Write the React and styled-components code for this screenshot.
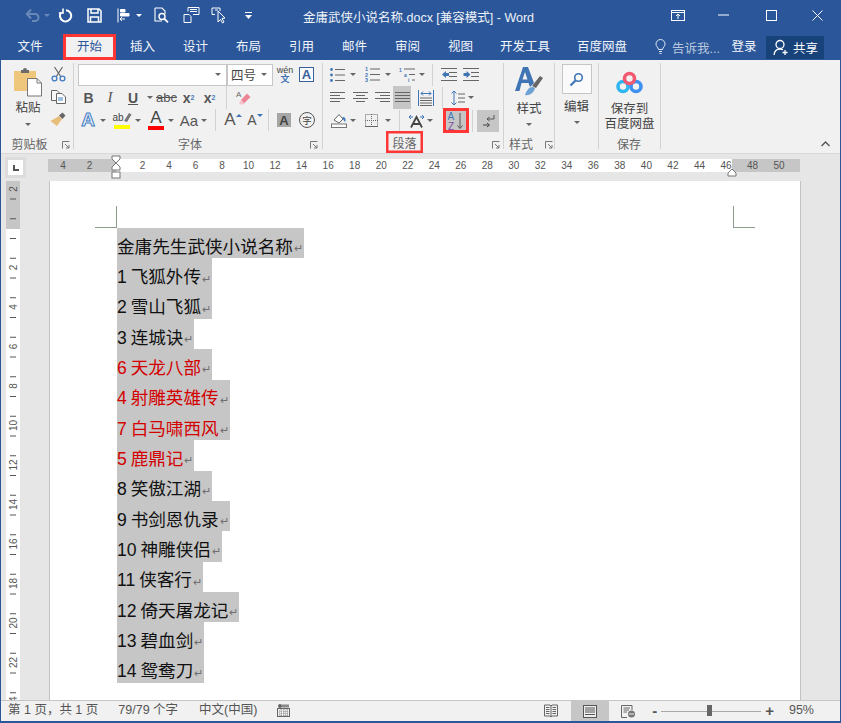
import React from "react";
import styled, { createGlobalStyle } from "styled-components";

const BLUE = "#2b579a";
const RED = "#ff3636";
const SEL = "#c6c6c6";

const Global = createGlobalStyle`
  html, body { margin: 0; padding: 0; background: #fff; }
  * { box-sizing: border-box; }
  #root { width: 841px; height: 723px; overflow: hidden; }
`;

const Window = styled.div`
  width: 841px; height: 723px; display: flex; flex-direction: column;
  border: solid ${BLUE}; border-width: 0 1px 2px 1px; background: #e6e6e6;
  font-family: "Liberation Sans", "Noto Sans CJK SC", sans-serif; font-size: 12.5px; color: #444;
  overflow: hidden;
`;
const TitleBar = styled.header`
  height: 30px; flex: none; background: ${BLUE}; display: flex; align-items: center; position: relative; color: #fff;
`;
const Qat = styled.div`display: flex; align-items: center; height: 30px;`;
const QatCell = styled.span`
  display: inline-flex; align-items: center; justify-content: center; height: 30px;
  width: ${p => p.$w}px; margin-left: ${p => p.$ml || 0}px;
`;
const TitleText = styled.div`
  position: absolute; left: 302px; top: 3px; height: 27px; line-height: 31px; font-size: 12.5px; color: #eef2f8; white-space: nowrap;
`;
const WinControls = styled.div`margin-left: auto; display: flex; align-items: center;`;
const WinBtn = styled.span`
  display: inline-flex; align-items: center; justify-content: center; height: 30px; width: ${p => p.$w}px; margin-left: ${p => p.$ml || 0}px;
`;

const TabBar = styled.nav`
  height: 30px; flex: none; background: ${BLUE}; display: flex; align-items: flex-end; color: #fff;
`;
const Tab = styled.div`
  width: ${p => p.$w}px; height: 26px; line-height: 27px; text-align: center; font-size: 12.5px; flex: none;
  color: ${p => (p.$active ? BLUE : "#f2f5fa")};
  background: ${p => (p.$active ? "#f1f1f1" : "transparent")};
  box-shadow: ${p => (p.$active ? `inset 0 0 0 3px ${RED}` : "none")};
`;
const TellMe = styled.div`
  width: 70px; height: 30px; margin-left: 14px; display: flex; align-items: center; gap: 6px; color: #b9c8de; font-size: 12.5px; white-space: nowrap; padding-top: 4px;
`;
const Login = styled.div`width: 38px; height: 26px; line-height: 27px; text-align: center; color: #f2f5fa;`;
const Share = styled.div`
  width: 58px; height: 23px; margin-bottom: 1px; margin-left: 3px; background: #17427a; display: flex; align-items: center; padding-left: 7px; gap: 3px; color: #fff;
`;

const Ribbon = styled.section`
  height: 93px; flex: none; background: #f1f1f1; display: flex; padding: 3px 0 4px; position: relative;
`;
const Group = styled.div`
  width: ${p => p.$w}px; flex: none; display: flex; flex-direction: column; border-right: 1px solid #d2d2d2;
`;
const GroupBody = styled.div`
  height: 68px; flex: none; display: flex; padding-left: ${p => p.$pl || 0}px;
`;
const GroupFoot = styled.div`
  height: 20px; display: flex; align-items: center; font-size: 12px; color: #666; padding-left: ${p => p.$pl || 0}px; padding-top: 5px;
`;
const FootLabel = styled.span`
  display: inline-flex; align-items: center; justify-content: center; width: ${p => p.$w}px; height: 18px; flex: none; white-space: nowrap;
  ${p => p.$mark ? `height: 22px; margin-top: -3px; box-shadow: inset 0 0 0 2.5px ${RED};` : ""}
`;
const Launcher = styled.svg`margin-left: ${p => p.$ml}px; flex: none; margin-top: 3px;`;
const BigBtn = styled.div`
  width: ${p => p.$w}px; display: flex; flex-direction: column; align-items: center; font-size: 12.5px; color: #444; line-height: 15px;
`;
const BigIcon = styled.div`
  height: ${p => p.$h}px; display: flex; align-items: center; justify-content: center; flex: none;
`;
const BigLabel = styled.span`margin-top: ${p => p.$mt || 0}px; white-space: nowrap;`;
const FramedIcon = styled.div`
  width: 30px; height: 30px; margin-top: 1px; border: 1px solid #c6c6c6; background: #fafafa; display: flex; align-items: center; justify-content: center;
`;
const SmallCol = styled.div`
  width: ${p => p.$w}px; display: flex; flex-direction: column; align-items: center;
`;
const SmallCell = styled.div`height: 23px; display: flex; align-items: center; justify-content: center;`;
const Rows = styled.div`display: flex; flex-direction: column; width: ${p => p.$w}px;`;
const Row = styled.div`height: ${p => p.$h || 23}px; display: flex; align-items: center; flex: none;`;
const Cell = styled.span`
  display: inline-flex; align-items: center; justify-content: center; flex: none; position: relative;
  width: ${p => p.$w}px; height: ${p => p.$h || 23}px; margin-left: ${p => p.$ml || 0}px;
  color: #555; font-weight: ${p => p.$b ? 700 : 400}; font-style: ${p => p.$i ? "italic" : "normal"};
  font-family: ${p => p.$serif ? '"Liberation Serif", serif' : "inherit"};
  font-size: ${p => p.$fs || 12.5}px; text-decoration: ${p => p.$td || "none"};
  background: ${p => p.$on ? SEL : "transparent"};
  ${p => p.$mark ? `box-shadow: inset 0 0 0 3px ${RED};` : ""}
`;
const Caret = styled.i`
  display: inline-block; flex: none; width: 0; height: 0;
  border-left: 3px solid transparent; border-right: 3px solid transparent; border-top: 3px solid ${p => p.$c || "#666"};
`;
const SizeCaret = styled(Caret)`
  margin-top: -10px;
  transform: ${p => p.$up ? "rotate(180deg)" : "none"};
`;
const CaretCell = styled.span`
  display: inline-flex; align-items: center; justify-content: center; flex: none; width: ${p => p.$w || 10}px; height: ${p => p.$h || 23}px; margin-left: ${p => p.$ml || 0}px;
`;
const VSep = styled.span`
  width: 1px; height: ${p => p.$h || 22}px; background: #d2d2d2; flex: none; margin-left: ${p => p.$ml || 0}px;
`;
const Combo = styled.div`
  width: ${p => p.$w}px; height: 22px; background: #fff; border: 1px solid #c6c6c6; flex: none; display: flex; align-items: center; justify-content: flex-end; padding-right: 5px;
`;
const ComboText = styled.span`margin-right: auto; padding-left: 3px; font-size: 12.5px; color: #444;`;
const GlyphBox = styled.span`
  display: inline-flex; align-items: center; justify-content: center; width: 15px; height: 15px; border: 1px solid #39629c; color: #39629c; font-size: 13px; font-weight: 700; background: #fbfbfb;
`;
const ShadeA = styled.span`
  display: inline-flex; align-items: center; justify-content: center; width: 14px; height: 14px; background: #a6a6a6; color: #444; font-size: 13px; font-weight: 700;
`;
const CircleZi = styled.span`
  display: inline-flex; align-items: center; justify-content: center; width: 16px; height: 16px; border: 1px solid #555; border-radius: 50%; font-size: 9.5px; color: #444;
`;
const Wen = styled.span`
  display: inline-flex; flex-direction: column; align-items: center; line-height: 9px; font-size: 9px; color: #444;
`;
const WenHan = styled.span`color: #3f74b5; font-size: 9px; font-weight: 700;`;
const SuperSub = styled.sub`font-size: 7px; color: #4a7eb8; line-height: 0;`;
const SuperSup = styled.sup`font-size: 7px; color: #4a7eb8; line-height: 0;`;
const ColourA = styled.span`
  display: inline-flex; flex-direction: column; align-items: center; width: 16px; font-size: ${p => p.$fs || 13}px; line-height: ${p => p.$lh || 12}px; color: #444;
`;
const MarkerRow = styled.span`display: flex; align-items: center;`;
const ColourBar = styled.i`display: block; width: 16px; height: 4px; margin-top: 1px; background: ${p => p.$c};`;
const OutlineA = styled.span`
  font-size: 19px; font-weight: 700; color: #e8f1fb; -webkit-text-stroke: 1px #3f7cc2;
`;
const Collapse = styled.svg`position: absolute; right: 10px; bottom: 6px;`;

const RulerBar = styled.div`
  height: 27px; flex: none; background: #e6e6e6; border-top: 1px solid #d8d8d8; display: flex; padding-left: 4px;
`;
const Corner = styled.div`
  width: 21px; height: 21px; margin-top: 3px; background: #dcdcdc; padding: 3px; flex: none;
`;
const CornerInner = styled.div`
  width: 15px; height: 15px; background: #fff; display: flex; align-items: center; justify-content: center;
`;
const RulerSlot = styled.div`margin-left: 22px; width: 752px; height: 26px;`;

const Main = styled.main`flex: 1; min-height: 0; display: flex; background: #e6e6e6;`;
const SideRuler = styled.div`width: 48px; padding: 1px 0 0 5px; flex: none; overflow: hidden;`;
const Page = styled.div`
  width: 752px; margin-top: 1px; background: #fff; border: solid #c2c2c2; border-width: 0 1px; flex: none; overflow: hidden;
`;
const Marks = styled.div`
  display: flex; justify-content: space-between; padding: 25px 45px 0 45px;
`;
const CropMark = styled.div`
  width: 22px; height: 22px; border-bottom: 1px solid #8b9b8b;
  ${p => p.$right ? "border-left: 1px solid #8b9b8b;" : "border-right: 1px solid #8b9b8b;"}
`;
const Doc = styled.div`padding-left: 67px; font-size: 17.6px; color: #111;`;
const Line = styled.div`height: 30.33px; display: flex;`;
const Sel = styled.span`
  display: inline-flex; align-items: center; height: 100%; background: ${SEL}; padding-top: 7px; white-space: pre; line-height: 22px; word-spacing: -1px;
  color: ${p => p.$red ? "#d40000" : "#111"};
`;
const Pilcrow = styled.span`
  display: inline-block; width: 11px; font-size: 11px; color: #6f6f6f; text-align: center; padding-top: 3px;
`;

const StatusBar = styled.footer`
  height: 21px; flex: none; background: #f1f1f1; border-top: 1px solid #c6c6c6; display: flex; align-items: stretch; color: #555; font-size: 12.5px; padding-right: 26px; line-height: 17px;
`;
const StatusItem = styled.span`
  display: inline-flex; align-items: center; margin-left: ${p => p.$ml}px; white-space: nowrap; flex: none; padding-bottom: 2px;
  font-size: ${p => p.$fs || 12.5}px; font-weight: ${p => p.$b ? 700 : 400};
`;
const ViewGroup = styled.div`margin-left: auto; display: flex; align-items: stretch;`;
const ViewBtn = styled.span`
  display: inline-flex; align-items: center; justify-content: center; flex: none; width: ${p => p.$w}px; margin-left: ${p => p.$ml || 0}px;
  background: ${p => p.$on ? "#c6c6c6" : "transparent"};
`;
const Slider = styled.div`
  width: 100px; margin-left: 4px; display: flex; align-items: center; position: relative; flex: none;
  &::before { content: ""; width: 100%; height: 1px; background: #a8a8a8; }
`;
const Thumb = styled.i`
  position: absolute; left: 46px; top: 4px; width: 5px; height: 11px; background: #666;
`;

/* ---------- icons ---------- */
const Undo = () => (
  <svg width="16" height="14" viewBox="0 0 16 14" fill="none" stroke="#6a88b8" strokeWidth="2">
    <path d="M2 6 H10 A3.5 3.5 0 0 1 10 13 H7" /><path d="M6 1.5 L1.8 6 L6 10.5" />
  </svg>
);
const Repeat = () => (
  <svg width="15" height="15" viewBox="0 0 15 15" fill="none" stroke="#fff" strokeWidth="2">
    <path d="M8 2.2 A5.6 5.6 0 1 1 3.2 4.3" /><path d="M5 0.5 V5 H0.8" strokeWidth="1.6" />
  </svg>
);
const SaveIc = () => (
  <svg width="15" height="15" viewBox="0 0 15 15" fill="none" stroke="#fff" strokeWidth="1.5">
    <path d="M1 1 H12 L14 3 V14 H1 Z" /><path d="M4 1 V5 H11 V1" /><path d="M3.5 14 V9 H11.5 V14" />
  </svg>
);
const Touch = () => (
  <svg width="14" height="15" viewBox="0 0 14 15" fill="none" stroke="#fff" strokeWidth="1">
    <path d="M1 0.5 V14.5" /><path d="M3.5 1.5 H8 V4 H3.5 Z" fill="#fff" /><path d="M3.5 5.5 H12 V8 H3.5 Z" fill="#fff" /><path d="M8 11 H3 M5 9 L3 11 L5 13" />
  </svg>
);
const Preview = () => (
  <svg width="15" height="16" viewBox="0 0 15 16" fill="none" stroke="#fff" strokeWidth="1.1">
    <path d="M1 1 H8 L11 4 V7 M1 1 V14 H8" /><circle cx="8" cy="9.5" r="3" strokeWidth="1.4" /><path d="M10.5 12 L14 15.3" strokeWidth="1.8" />
  </svg>
);
const NewDoc = () => (
  <svg width="17" height="16" viewBox="0 0 17 16" fill="none" stroke="#fff" strokeWidth="1">
    <path d="M1 7.5 H6 L8 9.5 V15.5 H1 Z" /><path d="M5 4.5 V0.5 H16 V7.5 H10" /><path d="M7 2.5 H14 M7 4.5 H14" />
  </svg>
);
const TouchSel = () => (
  <svg width="17" height="17" viewBox="0 0 17 17" fill="none" stroke="#fff" strokeWidth="1">
    <path d="M4 7.5 H1 V1 H9 V4" /><path d="M4 3 H7" /><path d="M7 4 L7 15 L9.5 12.5 L11.5 16 L13 15 L11 11.5 L14 11 Z" />
  </svg>
);
const Customize = () => (
  <svg width="7" height="7" viewBox="0 0 7 7" fill="#fff"><path d="M0 0 H7 V1 H0 Z M0 3 H7 L3.5 7 Z" /></svg>
);
const RibbonOpt = () => (
  <svg width="14" height="11" viewBox="0 0 14 11" fill="none" stroke="#fff"><rect x="0.5" y="0.5" width="13" height="10" /><path d="M0.5 2.5 H13.5" /><path d="M7 9 V4.5 M5 6 L7 4 L9 6" /></svg>
);
const Bulb = () => (
  <svg width="11" height="16" viewBox="0 0 11 16" fill="none" stroke="#dfe7f2"><path d="M3.5 10.5 C3 8 1 7.5 1 5 A4.5 4.5 0 0 1 10 5 C10 7.5 8 8 7.5 10.5 Z" /><path d="M4 12.5 H7 M4.5 14.5 H6.5" /></svg>
);
const UserPlus = () => (
  <svg width="17" height="17" viewBox="0 0 17 17" fill="none" stroke="#fff" strokeWidth="1.3"><circle cx="7" cy="5.5" r="4" /><path d="M1 16 C1.5 12 4 10 7 10 C8 10 9 10.2 10 10.8" /><path d="M12 11 V16 M9.5 13.5 H14.5" /></svg>
);
const Clipboard = () => (
  <svg width="30" height="30" viewBox="0 0 30 30">
    <path d="M1 4 H23 V24 H1 Z" fill="#efc77c" />
    <path d="M8 3 H10 A2 2 0 0 1 14 3 H16 V6 H8 Z" fill="#6b6b6b" />
    <path d="M14.5 11.5 H24 L28.5 16 V29 H14.5 Z" fill="#fff" stroke="#777" />
    <path d="M24 11.5 V16 H28.5" fill="none" stroke="#777" />
  </svg>
);
const ScissorsIc = () => (
  <svg width="15" height="16" viewBox="0 0 15 16" fill="none">
    <path d="M3.5 1 L10 11 M11.5 1 L5 11" stroke="#666" strokeWidth="1.2" />
    <circle cx="3.5" cy="12.5" r="2.4" stroke="#3f7cc2" strokeWidth="1.3" /><circle cx="11.5" cy="12.5" r="2.4" stroke="#3f7cc2" strokeWidth="1.3" />
  </svg>
);
const CopyIc = () => (
  <svg width="15" height="14" viewBox="0 0 15 14" fill="none" stroke="#666">
    <path d="M0.5 0.5 H6 L8 2.5 V10.5 H0.5 Z" fill="#f8f8f8" /><path d="M5.5 3.5 H11 L14.5 7 V13.5 H5.5 Z" fill="#fff" /><path d="M7 8 H12 M7 10 H12" stroke="#3f7cc2" />
  </svg>
);
const Brush = () => (
  <svg width="16" height="15" viewBox="0 0 16 15">
    <path d="M9 4 L12 7 L7 14 L0.5 9 Z" fill="#e6bd7a" /><path d="M9 3.5 L12.5 0.5 L15.5 3.5 L12.5 7 Z" fill="#666" />
  </svg>
);
const Eraser = () => (
  <svg width="15" height="16" viewBox="0 0 15 16">
    <path d="M5 10 L11 3.5 L14.5 7 L8 13.5 Z" fill="#ee8596" /><path d="M3 13.5 L5 10 L8 13.5 L6 15 Z" fill="#f5c3cb" />
    <text x="0" y="7" fontSize="8" fill="#666" fontFamily="Liberation Sans">A</text>
  </svg>
);
const Marker = () => (
  <svg width="8" height="11" viewBox="0 0 8 11"><path d="M0 9 L5 1 L7.5 2.5 L3 10 Z" fill="#777" /></svg>
);
const listLines = (ys, x1 = 0, x2 = 15) => ys.map(y => <path key={y} d={`M${x1} ${y} H${x2}`} stroke="#666" />);
const Bullets = () => (
  <svg width="15" height="14" viewBox="0 0 15 14">
    {[1.5, 7, 12.5].map(y => <circle key={y} cx="1.5" cy={y} r="1.4" fill="#3f74b5" />)}
    {[[5, 1.5], [5, 7], [5, 12.5]].map(([x, y]) => <path key={y} d={`M${x} ${y} H15`} stroke="#666" />)}
  </svg>
);
const Numbered = () => (
  <svg width="15" height="15" viewBox="0 0 15 15">
    {[[4, "1"], [9.5, "2"], [15, "3"]].map(([y, t]) => <text key={t} x="0" y={y} fontSize="5.5" fontWeight="700" fill="#3f74b5" fontFamily="Liberation Sans">{t}</text>)}
    {[2, 7.5, 13].map(y => <path key={y} d={`M5 ${y} H15`} stroke="#666" />)}
  </svg>
);
const Multi = () => (
  <svg width="17" height="15" viewBox="0 0 17 15">
    <text x="0" y="4.5" fontSize="5" fontWeight="700" fill="#3f74b5" fontFamily="Liberation Sans">1</text>
    <text x="5" y="9.5" fontSize="5" fontWeight="700" fill="#3f74b5" fontFamily="Liberation Sans">a</text>
    <text x="9" y="15" fontSize="5" fontWeight="700" fill="#3f74b5" fontFamily="Liberation Sans">i</text>
    <path d="M5 2 H16 M10 7.5 H16 M13 13 H16" stroke="#666" />
  </svg>
);
const Indent = ({ out }) => (
  <svg width="16" height="13" viewBox="0 0 16 13">
    {[0.5, 4.5, 8.5, 12.5].map(y => <path key={y} d={`M${y === 0.5 || y === 12.5 ? 0 : 8} ${y} H16`} stroke="#666" />)}
    <path d={out ? "M1 6.5 L5 3 V5 H8 V8 H5 V10 Z" : "M7.5 6.5 L3.5 3 V5 H0.5 V8 H3.5 V10 Z"} fill="#3f74b5" />
  </svg>
);
const Align = ({ kind }) => {
  const short = { left: [0, 10], center: [3, 12], right: [5, 15] }[kind];
  return (
    <svg width="15" height="11" viewBox="0 0 15 11">
      {[0.5, 3.5, 6.5, 9.5].map((y, i) => <path key={y} d={i % 2 && kind ? `M${short[0]} ${y} H${short[1]}` : `M0 ${y} H15`} stroke="#666" />)}
    </svg>
  );
};
const Distribute = () => (
  <svg width="16" height="16" viewBox="0 0 16 16">
    <path d="M0.5 0 V16 M15.5 0 V16" stroke="#3f74b5" /><path d="M3 3.5 H13 M3 3.5 L5 1.5 M3 3.5 L5 5.5 M13 3.5 L11 1.5 M13 3.5 L11 5.5" stroke="#3f74b5" fill="none" />
    {listLines([8, 10.5, 13, 15.5], 2, 14)}
  </svg>
);
const LineSpacing = () => (
  <svg width="14" height="16" viewBox="0 0 14 16" fill="none">
    <path d="M3 1 V15 M0.5 3.5 L3 1 L5.5 3.5 M0.5 12.5 L3 15 L5.5 12.5" stroke="#3f74b5" /><path d="M7 4 H14 M7 8 H14 M7 12 H14" stroke="#666" />
  </svg>
);
const Shading = () => (
  <svg width="16" height="15" viewBox="0 0 16 15">
    <path d="M3 7 L8 1.5 L12 6 L8 10 Z" fill="#fff" stroke="#666" /><path d="M11.5 4 C14 4 15.5 6 14 9 C12.5 7.5 12 6 11.5 4Z" fill="#3f7cc2" />
    <rect x="0.5" y="11" width="15" height="3.5" fill="#fff" stroke="#777" />
  </svg>
);
const Borders = () => (
  <svg width="13" height="13" viewBox="0 0 13 13" fill="none" stroke="#666" strokeDasharray="1 1">
    <rect x="0.5" y="0.5" width="12" height="12" /><path d="M6.5 0 V13 M0 6.5 H13" /><path d="M0 12.5 H13" strokeDasharray="none" />
  </svg>
);
const CnLayout = () => (
  <svg width="17" height="14" viewBox="0 0 17 14">
    <path d="M3 13.5 L8.5 3 L14 13.5 M5 10 H12" fill="none" stroke="#444" strokeWidth="1.8" />
    <path d="M1 3 H5 M1 3 L3 1 M1 3 L3 5 M12 3 H16 M16 3 L14 1 M16 3 L14 5" stroke="#3f74b5" fill="none" />
  </svg>
);
const Sort = () => (
  <svg width="16" height="18" viewBox="0 0 16 18">
    <text x="-0.5" y="8" fontSize="10" fill="#3f74b5" fontFamily="Liberation Sans">A</text>
    <text x="0" y="17.5" fontSize="10" fill="#7b4fa3" fontFamily="Liberation Sans">Z</text>
    <path d="M12 1 V16 M9.5 13.5 L12 16.5 L14.5 13.5" fill="none" stroke="#555" />
  </svg>
);
const Para = () => (
  <svg width="13" height="14" viewBox="0 0 13 14" fill="none" stroke="#555">
    <path d="M12 1 V5 H5 M7.5 3 L5 5 L7.5 7" /><path d="M1 11 H7 M5 9 L7.5 11 L5 13" stroke="#444" />
  </svg>
);
const StyleA = () => (
  <svg width="28" height="30" viewBox="0 0 28 30">
    <path d="M0 24 L8 0 H13 L19 16 L15 20 L13.5 16 H6.5 L4.5 24 Z M7.5 12.5 H12.5 L10 5 Z" fill="#3f74b5" fillRule="evenodd" />
    <path d="M17 19 L25 9 L28 11 L21 21 Z" fill="#666" /><path d="M10 28 C12 22 16 18 20 21 C19 26 14 29 10 28 Z" fill="#6ea1d6" />
  </svg>
);
const Search = () => (
  <svg width="15" height="15" viewBox="0 0 15 15" fill="none" stroke="#3f74b5"><circle cx="9.5" cy="5.5" r="3.8" strokeWidth="1.6" /><path d="M6.5 8.5 L1.5 13.5" strokeWidth="2.2" /></svg>
);
const BaiduLogo = () => (
  <svg width="27" height="24" viewBox="0 0 27 24" fill="none">
    <circle cx="7" cy="15.5" r="5" stroke="#2fb5ef" strokeWidth="3.6" />
    <circle cx="20" cy="15.5" r="5" stroke="#3d8ff0" strokeWidth="3.6" />
    <circle cx="13.5" cy="7.5" r="5" stroke="#f2586f" strokeWidth="3.6" />
  </svg>
);
const LauncherIc = ({ ml }) => (
  <Launcher $ml={ml} width="8" height="8" viewBox="0 0 8 8" fill="none" stroke="#777">
    <path d="M0.5 7.5 V0.5 H7.5" /><path d="M3 3 L7 7 M7 4 V7 H4" />
  </Launcher>
);
const BookView = () => (
  <svg width="14" height="14" viewBox="0 0 14 14" fill="none" stroke="#666"><path d="M0.5 1 H6 L7 2 L8 1 H13.5 V12 H8 L7 13 L6 12 H0.5 Z M7 2 V13" /><path d="M2 3.5 H5.5 M2 5.5 H5.5 M2 7.5 H5.5 M2 9.5 H5.5 M8.5 3.5 H12 M8.5 5.5 H12 M8.5 7.5 H12 M8.5 9.5 H12" /></svg>
);
const PrintView = () => (
  <svg width="14" height="13" viewBox="0 0 14 13" fill="none" stroke="#555"><rect x="0.5" y="0.5" width="13" height="12" fill="#eee" /><path d="M2 3 H12 M2 5 H12 M2 7 H12 M2 9.5 H12" /></svg>
);
const WebView = () => (
  <svg width="15" height="13" viewBox="0 0 15 13" fill="none" stroke="#666"><path d="M6 12.5 H0.5 V0.5 H11 V5" /><path d="M2.5 3 H9 M2.5 5 H8 M2.5 7 H6" /><circle cx="10.5" cy="9" r="3.5" fill="#777" stroke="none" /><path d="M8 9 H13" stroke="#eee" /></svg>
);
const MacroIc = () => (
  <svg width="13" height="13" viewBox="0 0 13 13"><circle cx="3" cy="2" r="2" fill="#666" /><rect x="5" y="0.5" width="7" height="3" fill="#888" /><rect x="0.5" y="4.5" width="12" height="8" fill="none" stroke="#666" /><path d="M2 7 H11 M2 9 H11 M2 11 H11 M4 5 V12 M7 5 V12 M10 5 V12" stroke="#888" strokeDasharray="1 1" /></svg>
);

/* ---------- rulers ---------- */
const UNIT = 13.26;
const HRuler = () => {
  const labels = [];
  for (let n = 2; n <= 50; n += 2) labels.push([n, 68 + n * UNIT]);
  labels.unshift([4, 68 - 4 * UNIT], [2, 68 - 2 * UNIT]);
  return (
    <svg width="752" height="26" viewBox="0 0 752 26">
      <rect x="0" y="5" width="752" height="13" fill="#fff" />
      <rect x="0" y="5" width="68" height="13" fill="#c6c6c6" />
      <rect x="684" y="5" width="68" height="13" fill="#c6c6c6" />
      {labels.map(([n, x]) => (
        <text key={x} x={x} y="15" fontSize="10" textAnchor="middle" fill="#555" fontFamily="Liberation Sans">{n}</text>
      ))}
      <path d="M64 2 H72 V5 L68 9 L72 13 V16 H64 V13 L68 9 L64 5 Z" fill="#fff" stroke="#777" />
      <rect x="64" y="18" width="8" height="6" fill="#fff" stroke="#777" />
      <path d="M680 22 V19 L684 15 L688 19 V22 Z" fill="#fff" stroke="#777" />
    </svg>
  );
};
const VRuler = () => {
  const ticks = [];
  for (let i = -2; i < 25; i++) ticks.push(48 + 9.5 + i * 19.75);
  const nums = [[-1, "2"]];
  for (let n = 2; n <= 24; n += 2) nums.push([n, String(n)]);
  return (
    <svg width="14" height="519" viewBox="0 0 14 519">
      <rect width="14" height="519" fill="#fff" />
      <rect width="14" height="48" fill="#c6c6c6" />
      {ticks.map(y => <path key={y} d={`M4 ${y} H10`} stroke="#555" />)}
      {nums.map(([n, t]) => {
        const y = n < 0 ? 8 : 47 + n * 19.75;
        return (
          <text key={n} x="7" y={y} fontSize="10" fill="#555" textAnchor="middle" dominantBaseline="central"
            fontFamily="Liberation Sans" transform={`rotate(-90 7 ${y})`}>{t}</text>
        );
      })}
    </svg>
  );
};

const lines = [
  { t: "金庸先生武侠小说名称" },
  { t: "1 飞狐外传" },
  { t: "2 雪山飞狐" },
  { t: "3 连城诀" },
  { t: "6 天龙八部", red: true },
  { t: "4 射雕英雄传", red: true },
  { t: "7 白马啸西风", red: true },
  { t: "5 鹿鼎记", red: true },
  { t: "8 笑傲江湖" },
  { t: "9 书剑恩仇录" },
  { t: "10 神雕侠侣" },
  { t: "11 侠客行" },
  { t: "12 倚天屠龙记" },
  { t: "13 碧血剑" },
  { t: "14 鸳鸯刀" },
];

export default function App() {
  return (
    <>
      <Global />
      <Window>
        <TitleBar>
          <Qat>
            <QatCell $w={18} $ml={23}><Undo /></QatCell>
            <QatCell $w={6} $ml={2}><Caret $c="#6a88b8" /></QatCell>
            <QatCell $w={18} $ml={6}><Repeat /></QatCell>
            <QatCell $w={18} $ml={11}><SaveIc /></QatCell>
            <QatCell $w={16} $ml={13}><Touch /></QatCell>
            <QatCell $w={6} $ml={4}><Caret $c="#fff" /></QatCell>
            <QatCell $w={18} $ml={10}><Preview /></QatCell>
            <QatCell $w={18} $ml={12}><NewDoc /></QatCell>
            <QatCell $w={18} $ml={10}><TouchSel /></QatCell>
            <QatCell $w={8} $ml={16}><Customize /></QatCell>
          </Qat>
          <TitleText>金庸武侠小说名称.docx [兼容模式] - Word</TitleText>
          <WinControls>
            <WinBtn $w={14}><RibbonOpt /></WinBtn>
            <WinBtn $w={12} $ml={33}><svg width="12" height="2"><path d="M0 1 H11" stroke="#fff" /></svg></WinBtn>
            <WinBtn $w={12} $ml={35}><svg width="11" height="11" fill="none" stroke="#fff"><rect x="0.5" y="0.5" width="10" height="10" /></svg></WinBtn>
            <WinBtn $w={12} $ml={34}><svg width="11" height="11" stroke="#fff"><path d="M0.5 0.5 L10.5 10.5 M10.5 0.5 L0.5 10.5" /></svg></WinBtn>
            <WinBtn $w={17} />
          </WinControls>
        </TitleBar>

        <TabBar>
          <Tab $w={58}>文件</Tab>
          <Tab $w={4} />
          <Tab $w={53} $active>开始</Tab>
          <Tab $w={53}>插入</Tab>
          <Tab $w={53}>设计</Tab>
          <Tab $w={53}>布局</Tab>
          <Tab $w={53}>引用</Tab>
          <Tab $w={53}>邮件</Tab>
          <Tab $w={53}>审阅</Tab>
          <Tab $w={53}>视图</Tab>
          <Tab $w={76}>开发工具</Tab>
          <Tab $w={78}>百度网盘</Tab>
          <TellMe><Bulb />告诉我...</TellMe>
          <Login>登录</Login>
          <Share><UserPlus />共享</Share>
        </TabBar>

        <Ribbon>
          <Group $w={73}>
            <GroupBody $pl={7}>
              <BigBtn $w={40}>
                <BigIcon $h={38}><Clipboard /></BigIcon>
                <BigLabel>粘贴</BigLabel>
                <CaretCell $h={16}><Caret /></CaretCell>
              </BigBtn>
              <SmallCol $w={20}>
                <SmallCell><ScissorsIc /></SmallCell>
                <SmallCell><CopyIc /></SmallCell>
                <SmallCell><Brush /></SmallCell>
              </SmallCol>
            </GroupBody>
            <GroupFoot $pl={10}>
              <FootLabel $w={37}>剪贴板</FootLabel>
              <LauncherIc ml={14} />
            </GroupFoot>
          </Group>

          <Group $w={249}>
            <GroupBody $pl={4}>
              <Rows $w={244}>
                <Row>
                  <Combo $w={149}><Caret /></Combo>
                  <Combo $w={46}><ComboText>四号</ComboText><Caret /></Combo>
                  <Cell $w={18} $ml={3}><Wen>wén<WenHan>文</WenHan></Wen></Cell>
                  <Cell $w={17} $ml={4}><GlyphBox>A</GlyphBox></Cell>
                </Row>
                <Row $h={23}>
                  <Cell $w={21} $b $fs={14}>B</Cell>
                  <Cell $w={22} $i $fs={15} $serif>I</Cell>
                  <Cell $w={24} $b $fs={14} $td="underline">U</Cell>
                  <CaretCell><Caret /></CaretCell>
                  <Cell $w={23} $fs={13} $td="line-through">abc</Cell>
                  <Cell $w={21} $b $fs={14}>x<SuperSub>2</SuperSub></Cell>
                  <Cell $w={21} $b $fs={14}>x<SuperSup>2</SuperSup></Cell>
                  <VSep $h={23} $ml={6} />
                  <Cell $w={32}><Eraser /></Cell>
                </Row>
                <Row $h={22}>
                  <Cell $w={20}><OutlineA>A</OutlineA></Cell>
                  <CaretCell><Caret /></CaretCell>
                  <Cell $w={22} $ml={3}>
                    <ColourA $fs={10}><MarkerRow>ab<Marker /></MarkerRow><ColourBar $c="#ffff00" /></ColourA>
                  </Cell>
                  <CaretCell><Caret /></CaretCell>
                  <Cell $w={20} $ml={3}><ColourA $fs={17} $lh={14}>A<ColourBar $c="#ff0000" /></ColourA></Cell>
                  <CaretCell><Caret /></CaretCell>
                  <Cell $w={22} $ml={2} $fs={15}>Aa</Cell>
                  <CaretCell $w={8}><Caret /></CaretCell>
                  <VSep $ml={7} />
                  <Cell $w={22} $ml={6} $fs={17}>A<SizeCaret $c="#3f74b5" $up /></Cell>
                  <Cell $w={22} $fs={14}>A<SizeCaret $c="#3f74b5" /></Cell>
                  <VSep $ml={2} />
                  <Cell $w={30}><ShadeA>A</ShadeA></Cell>
                  <Cell $w={16}><CircleZi>字</CircleZi></Cell>
                </Row>
              </Rows>
            </GroupBody>
            <GroupFoot $pl={101}>
              <FootLabel $w={30}>字体</FootLabel>
              <LauncherIc ml={105} />
            </GroupFoot>
          </Group>

          <Group $w={181}>
            <GroupBody $pl={4}>
              <Rows $w={177}>
                <Row>
                  <Cell $w={17} $ml={2}><Bullets /></Cell>
                  <CaretCell $ml={2}><Caret /></CaretCell>
                  <Cell $w={17} $ml={6}><Numbered /></Cell>
                  <CaretCell $ml={2}><Caret /></CaretCell>
                  <Cell $w={18} $ml={5}><Multi /></Cell>
                  <CaretCell $ml={1}><Caret /></CaretCell>
                  <VSep $ml={5} />
                  <Cell $w={20} $ml={6}><Indent out /></Cell>
                  <Cell $w={20} $ml={2}><Indent /></Cell>
                </Row>
                <Row $h={23}>
                  <Cell $w={17} $ml={2}><Align kind="left" /></Cell>
                  <Cell $w={22} $ml={3}><Align kind="center" /></Cell>
                  <Cell $w={22}><Align kind="right" /></Cell>
                  <Cell $w={18} $on $h={23}><Align /></Cell>
                  <Cell $w={24} $ml={3}><Distribute /></Cell>
                  <VSep $ml={4} />
                  <Cell $w={16} $ml={7}><LineSpacing /></Cell>
                  <CaretCell><Caret /></CaretCell>
                </Row>
                <Row $h={23}>
                  <Cell $w={19} $ml={2}><Shading /></Cell>
                  <CaretCell><Caret /></CaretCell>
                  <Cell $w={16} $ml={5}><Borders /></Cell>
                  <CaretCell $ml={4}><Caret /></CaretCell>
                  <VSep $ml={6} />
                  <Cell $w={18} $ml={7}><CnLayout /></Cell>
                  <CaretCell><Caret /></CaretCell>
                  <Cell $w={26} $ml={8} $on $mark $h={25}><Sort /></Cell>
                  <VSep $ml={3} />
                  <Cell $w={22} $ml={4} $on $h={22}><Para /></Cell>
                </Row>
              </Rows>
            </GroupBody>
            <GroupFoot $pl={63}>
              <FootLabel $w={37} $mark>段落</FootLabel>
              <LauncherIc ml={69} />
            </GroupFoot>
          </Group>

          <Group $w={51}>
            <GroupBody>
              <BigBtn $w={50}>
                <BigIcon $h={38}><StyleA /></BigIcon>
                <BigLabel $mt={1}>样式</BigLabel>
                <CaretCell $h={14}><Caret /></CaretCell>
              </BigBtn>
            </GroupBody>
            <GroupFoot $pl={5}>
              <FootLabel $w={24}>样式</FootLabel>
              <LauncherIc ml={12} />
            </GroupFoot>
          </Group>

          <Group $w={44}>
            <GroupBody>
              <BigBtn $w={43}>
                <FramedIcon><Search /></FramedIcon>
                <BigLabel $mt={6}>编辑</BigLabel>
                <CaretCell $h={14}><Caret /></CaretCell>
              </BigBtn>
            </GroupBody>
          </Group>

          <Group $w={62}>
            <GroupBody>
              <BigBtn $w={61}>
                <BigIcon $h={39}><BaiduLogo /></BigIcon>
                <BigLabel>保存到</BigLabel>
                <BigLabel>百度网盘</BigLabel>
              </BigBtn>
            </GroupBody>
            <GroupFoot $pl={15}>
              <FootLabel $w={30}>保存</FootLabel>
            </GroupFoot>
          </Group>

          <Collapse width="9" height="6" viewBox="0 0 9 6" fill="none" stroke="#555" strokeWidth="1.4"><path d="M0.5 5 L4.5 1 L8.5 5" /></Collapse>
        </Ribbon>

        <RulerBar>
          <Corner>
            <CornerInner>
              <svg width="6" height="6" stroke="#555" strokeWidth="2" fill="none"><path d="M1 0 V5 H6" /></svg>
            </CornerInner>
          </Corner>
          <RulerSlot><HRuler /></RulerSlot>
        </RulerBar>

        <Main>
          <SideRuler><VRuler /></SideRuler>
          <Page>
            <Marks><CropMark /><CropMark $right /></Marks>
            <Doc>
              {lines.map(l => (
                <Line key={l.t}>
                  <Sel $red={l.red}>{l.t}<Pilcrow>↵</Pilcrow></Sel>
                </Line>
              ))}
            </Doc>
          </Page>
        </Main>

        <StatusBar>
          <StatusItem $ml={7}>第 1 页，共 1 页</StatusItem>
          <StatusItem $ml={20}>79/79 个字</StatusItem>
          <StatusItem $ml={21}>中文(中国)</StatusItem>
          <StatusItem $ml={20}><MacroIc /></StatusItem>
          <ViewGroup>
            <ViewBtn $w={20}><BookView /></ViewBtn>
            <ViewBtn $w={38} $ml={10} $on><PrintView /></ViewBtn>
            <ViewBtn $w={20} $ml={9}><WebView /></ViewBtn>
            <StatusItem $ml={14} $fs={15} $b>-</StatusItem>
            <Slider><Thumb /></Slider>
            <StatusItem $ml={4} $fs={15} $b>+</StatusItem>
            <StatusItem $ml={15}>95%</StatusItem>
          </ViewGroup>
        </StatusBar>
      </Window>
    </>
  );
}
